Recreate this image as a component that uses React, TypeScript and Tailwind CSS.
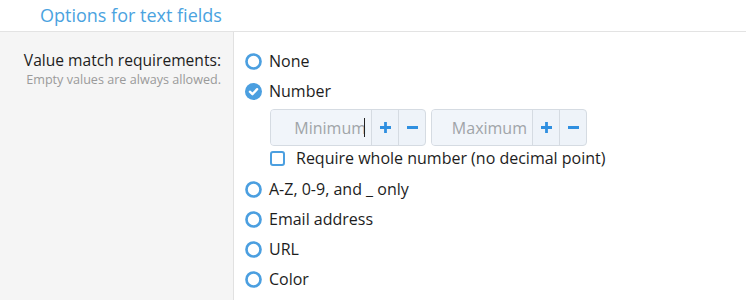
import React from "react";

const Radio = ({ checked }: { checked?: boolean }) =>
  checked ? (
    <svg width="17" height="17" viewBox="0 0 16 16" className="shrink-0">
      <circle cx="8" cy="8" r="8" fill="#4b9fe0" />
      <path d="M4.6 8.2 L7 10.5 L11.4 5.8" stroke="#fff" strokeWidth="2.2" fill="none" strokeLinecap="round" strokeLinejoin="round" />
    </svg>
  ) : (
    <svg width="17" height="17" viewBox="0 0 16 16" className="shrink-0">
      <circle cx="8" cy="8" r="6.6" fill="#fff" stroke="#4b9fe0" strokeWidth="2.5" />
    </svg>
  );

const RadioRow = ({ label, checked }: { label: string; checked?: boolean }) => (
  <div className="flex items-center h-[30px] gap-[7px]">
    <Radio checked={checked} />
    <span>{label}</span>
  </div>
);

const NumberBox = ({ placeholder, caret }: { placeholder: string; caret?: boolean }) => (
  <div className="flex h-[37px] border border-[#d5dbe2] rounded-[4px] bg-[#eef3f9] overflow-hidden">
    <div className="w-[100px] flex items-center justify-end pr-[5px] text-[#a0a4a8] bg-[#f1f5fa]">
      <span>{placeholder}</span>
      {caret && <span className="w-[1px] h-[19px] bg-[#222] ml-[-2px] mr-[1px]" />}
    </div>
    <div className="w-[27px] border-l border-[#d5dbe2] flex items-center justify-center">
      <svg width="13" height="13" viewBox="0 0 13 13">
        <path d="M6.5 1 V12 M1 6.5 H12" stroke="#2f8fe0" strokeWidth="2.8" />
      </svg>
    </div>
    <div className="w-[27px] border-l border-[#d5dbe2] flex items-center justify-center">
      <svg width="13" height="13" viewBox="0 0 13 13">
        <path d="M1 6.5 H12" stroke="#2f8fe0" strokeWidth="2.8" />
      </svg>
    </div>
  </div>
);

export default function App() {
  return (
    <div className="w-[746px] h-[300px] bg-white overflow-hidden text-[16px] text-[#1d1d1d]" style={{ fontFamily: '"Open Sans", "Noto Sans", sans-serif' }}>
      <div className="h-[32px] border-b border-[#e3e3e3] pl-[40px] flex items-center">
        <span className="text-[18px] text-[#4aa3e0]">Options for text fields</span>
      </div>
      <div className="flex h-[268px]">
        <div className="w-[234px] bg-[#f5f5f5] border-r border-[#e1e1e1] pr-[12px] pt-[17px] text-right">
          <div className="leading-[22px] text-[15.6px]">Value match requirements:</div>
          <div className="text-[12.6px] text-[#9a9a9a] leading-[18px]">Empty values are always allowed.</div>
        </div>
        <div className="pl-[11px] pt-[14px]">
          <RadioRow label="None" />
          <RadioRow label="Number" checked />
          <div className="pl-[25px] pt-[3px]">
            <div className="flex gap-[5px]">
              <NumberBox placeholder="Minimum" caret />
              <NumberBox placeholder="Maximum" />
            </div>
            <div className="flex items-center h-[24px] gap-[11px]">
              <span className="w-[15px] h-[15px] border-2 border-[#4b9fe0] rounded-[3px] bg-white" />
              <span>Require whole number (no decimal point)</span>
            </div>
          </div>
          <div className="pt-[4px]">
            <RadioRow label="A-Z, 0-9, and _ only" />
            <RadioRow label="Email address" />
            <RadioRow label="URL" />
            <RadioRow label="Color" />
          </div>
        </div>
      </div>
    </div>
  );
}
